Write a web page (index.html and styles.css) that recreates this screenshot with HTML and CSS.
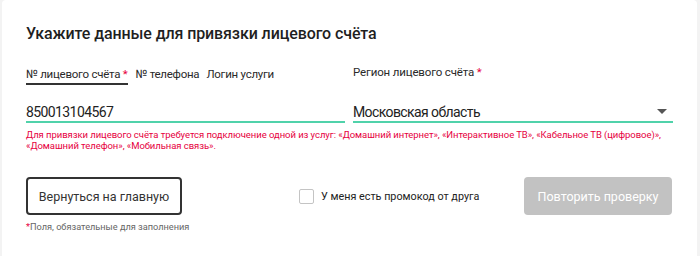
FILE: index.html
```html
<!DOCTYPE html>
<html lang="ru">
<head>
<meta charset="utf-8">
<link rel="stylesheet" href="styles.css">
</head>
<body>
<div class="card">
  <h1 class="title">Укажите данные для привязки лицевого счёта</h1>
  <div class="fields">
    <div class="field">
      <div class="tabs">
        <span class="tab active">№ лицевого счёта <span class="req">*</span></span>
        <span class="tab">№ телефона</span>
        <span class="tab">Логин услуги</span>
      </div>
      <div class="input">850013104567</div>
    </div>
    <div class="field">
      <div class="label">Регион лицевого счёта <span class="req">*</span></div>
      <div class="input select">
        <span>Московская область</span>
        <svg class="caret" width="10" height="5" viewBox="0 0 10 5"><path d="M0 0H10L5 5Z" fill="#555"/></svg>
      </div>
    </div>
  </div>
  <p class="error">Для привязки лицевого счёта требуется подключение одной из услуг: «Домашний интернет», «Интерактивное ТВ», «Кабельное ТВ (цифровое)», «Домашний телефон», «Мобильная связь».</p>
  <div class="actions">
    <button class="btn btn-outline">Вернуться на главную</button>
    <label class="check"><span class="box"></span>У меня есть промокод от друга</label>
    <button class="btn btn-disabled">Повторить проверку</button>
  </div>
  <p class="note"><span class="req">*</span>Поля, обязательные для заполнения</p>
</div>
</body>
</html>
```
FILE: styles.css
```css
html, body {
  margin: 0;
  padding: 0;
  background: #f3f3f3;
  font-family: Roboto, "Liberation Sans", sans-serif;
  color: #222;
}
.card {
  margin: 0 3px 0 2px;
  background: #fff;
  border-radius: 4px 4px 0 0;
  height: 256px;
  padding: 22px 24px 0 24px;
  box-sizing: border-box;
}
.title {
  margin: 0;
  font-size: 16px;
  line-height: 24px;
  font-weight: 500;
  letter-spacing: -0.1px;
  color: #1f1f1f;
}
.fields {
  display: grid;
  grid-template-columns: 319px 320px;
  column-gap: 8px;
  margin-top: 18px;
}
.tabs {
  display: flex;
  gap: 7px;
  font-size: 11.5px;
  letter-spacing: -0.25px;
  color: #2a2a2a;
  height: 21px;
}
.tab {
  padding: 2px 0 1px 0;
  line-height: 16px;
  border-bottom: 2px solid transparent;
}
.tab.active {
  border-bottom-color: #333;
  padding-right: 1px;
}
.req {
  color: #e6003e;
}
.label {
  font-size: 11.5px;
  letter-spacing: -0.15px;
  line-height: 16px;
  color: #2a2a2a;
  height: 21px;
}
.input {
  margin-top: 18px;
  font-size: 14px;
  letter-spacing: -0.6px;
  line-height: 18px;
  color: #222;
  border-bottom: 2px solid #50d2aa;
}
.select {
  display: flex;
  justify-content: space-between;
  align-items: center;
}
.caret {
  margin-right: 6px;
  margin-top: -2px;
}
.error {
  margin: 6px 0 0;
  font-size: 9.5px;
  letter-spacing: -0.06px;
  line-height: 11px;
  color: #e6003e;
}
.actions {
  display: flex;
  align-items: center;
  margin-top: 26px;
}
.btn {
  font-family: inherit;
  font-size: 12.5px;
  height: 38px;
  border-radius: 4px;
  padding: 0;
  white-space: nowrap;
  box-sizing: border-box;
}
.btn-outline {
  background: #fff;
  border: 2px solid #333;
  color: #333;
  width: 156px;
}
.check {
  display: flex;
  align-items: center;
  gap: 7px;
  font-size: 10.8px;
  color: #222;
  margin-left: 117px;
}
.box {
  width: 13px;
  height: 13px;
  border: 1px solid #c4c4c4;
  border-radius: 2px;
}
.btn-disabled {
  margin-left: auto;
  margin-right: 1px;
  background: #c2c2c2;
  border: none;
  color: #fff;
  width: 148px;
}
.note {
  margin: 6px 0 0;
  font-size: 9.2px;
  line-height: 12px;
  color: #666;
}
```
